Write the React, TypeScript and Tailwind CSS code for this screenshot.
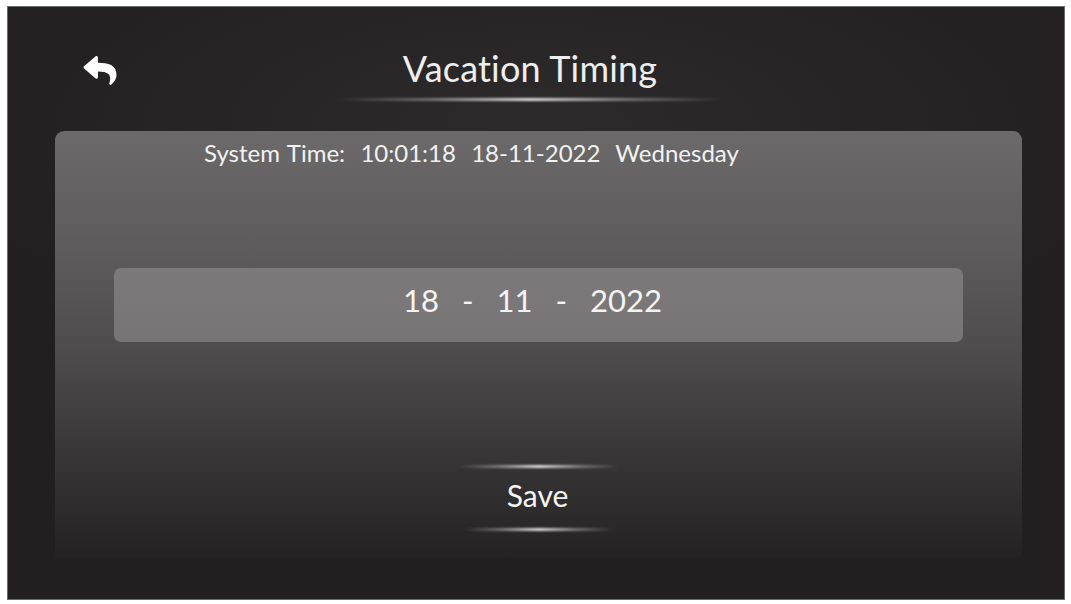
import { FaReply } from 'react-icons/fa'

const glow =
  'bg-[linear-gradient(90deg,rgba(255,255,255,0)_0%,rgba(255,255,255,0.35)_25%,rgba(255,255,255,0.85)_50%,rgba(255,255,255,0.35)_75%,rgba(255,255,255,0)_100%)]'

export default function App() {
  return (
    <div className="w-[1071px] h-[604px] bg-white pt-[6px] pl-[7px] font-['Lato','Open_Sans',sans-serif]">
      <div className="w-[1058px] h-[594px] flex flex-col border border-[#6a6a6a] bg-[#211f20] bg-[radial-gradient(ellipse_60%_40%_at_50%_20%,#2c2a2b_0%,#211f20_100%)] overflow-hidden">
        {/* header */}
        <div className="h-[124px] grid grid-cols-[1fr_auto_1fr] shrink-0">
          <div className="pl-[74px] pt-[47px]">
            <FaReply className="w-[36px] h-[33px] text-white" />
          </div>
          <div className="flex flex-col items-center pt-[40px] mr-[12px]">
            <div className="text-[36px] leading-[42px] text-[#eeeeee] tracking-[0.2px]">
              Vacation Timing
            </div>
            <div className={`mt-[9px] w-[390px] h-[3px] rounded-full blur-[1px] ${glow}`} />
          </div>
          <div />
        </div>

        {/* card */}
        <div className="ml-[47px] mr-[42px] h-[426px] rounded-t-[9px] bg-[linear-gradient(180deg,#6b696a_0%,#5c5a5b_30%,#4b494a_55%,#363435_78%,#242223_100%)] flex flex-col">
          <div className="pl-[149px] pt-[8px] text-[24px] leading-[28px] text-[#f2f2f2] whitespace-pre [word-spacing:1.5px]">
            {'System Time:  10:01:18  18-11-2022  Wednesday'}
          </div>

          <div className="mt-[101px] mx-[59px] h-[74px] rounded-[7px] bg-[linear-gradient(180deg,#7b797a_0%,#777576_100%)] flex justify-center pt-[14px]">
            <div className="flex gap-[23px] text-[31px] leading-[37px] text-[#f4f4f4] -ml-[12px]">
              <span>18</span>
              <span>-</span>
              <span>11</span>
              <span>-</span>
              <span>2022</span>
            </div>
          </div>

          <div className="mt-[123px] flex flex-col items-center">
            <div className={`w-[160px] h-[3px] rounded-full blur-[1px] ${glow}`} />
            <div className="mt-[9px] text-[30px] leading-[36px] text-[#f4f4f4] -ml-[2px]">Save</div>
            <div className={`mt-[15px] w-[150px] h-[3px] rounded-full blur-[1px] ${glow}`} />
          </div>
        </div>
      </div>
    </div>
  )
}
